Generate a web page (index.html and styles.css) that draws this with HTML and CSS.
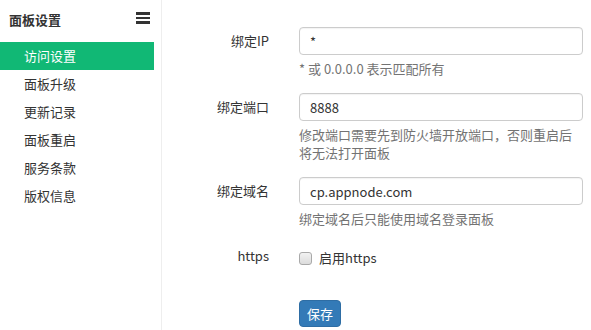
FILE: index.html
```html
<!DOCTYPE html>
<html lang="zh-CN">
<head>
  <meta charset="UTF-8">
  <title>面板设置</title>
  <link rel="stylesheet" href="styles.css">
</head>
<body>
  <div class="layout">
    <!-- Sidebar -->
    <aside class="sidebar">
      <div class="sidebar-header">
        <span class="sidebar-title">面板设置</span>
        <span class="menu-toggle"><i></i><i></i><i></i></span>
      </div>
      <ul class="nav">
        <li class="nav-item active">访问设置</li>
        <li class="nav-item">面板升级</li>
        <li class="nav-item">更新记录</li>
        <li class="nav-item">面板重启</li>
        <li class="nav-item">服务条款</li>
        <li class="nav-item">版权信息</li>
      </ul>
    </aside>

    <!-- Main Form -->
    <main class="content">
      <form class="form">
        <div class="form-group">
          <label class="form-label">绑定IP</label>
          <div class="form-field">
            <input class="form-input" type="text" value="*">
            <p class="help">* 或 0.0.0.0 表示匹配所有</p>
          </div>
        </div>
        <div class="form-group">
          <label class="form-label">绑定端口</label>
          <div class="form-field">
            <input class="form-input" type="text" value="8888">
            <p class="help">修改端口需要先到防火墙开放端口，否则重启后将无法打开面板</p>
          </div>
        </div>
        <div class="form-group">
          <label class="form-label">绑定域名</label>
          <div class="form-field">
            <input class="form-input" type="text" value="cp.appnode.com">
            <p class="help">绑定域名后只能使用域名登录面板</p>
          </div>
        </div>
        <div class="form-group form-group-check">
          <label class="form-label">https</label>
          <div class="form-field">
            <label class="check"><input type="checkbox"> 启用https</label>
          </div>
        </div>
        <div class="form-group form-group-actions">
          <span class="form-label"></span>
          <div class="form-field">
            <button type="button" class="btn-primary">保存</button>
          </div>
        </div>
      </form>
    </main>
  </div>
</body>
</html>
```

FILE: styles.css
```css
* {
  margin: 0;
  padding: 0;
  box-sizing: border-box;
}

body {
  font-family: "Noto Sans CJK SC", "Noto Sans", sans-serif;
  font-size: 13px;
  color: #333;
  background-color: #fff;
  line-height: 18px;
}

.layout {
  display: flex;
  min-height: 330px;
}

/* Sidebar */
.sidebar {
  width: 162px;
  padding-right: 7px;
  border-right: 1px solid #eee;
  flex-shrink: 0;
}

.sidebar-header {
  display: flex;
  align-items: center;
  justify-content: space-between;
  height: 42px;
  padding: 0 4px 2px 9px;
}

.sidebar-title {
  font-weight: bold;
  font-size: 13px;
  color: #333;
}

.menu-toggle {
  display: flex;
  flex-direction: column;
  gap: 2px;
  width: 14px;
  margin-top: -4px;
}

.menu-toggle i {
  display: block;
  height: 2.5px;
  background-color: #333;
}

.nav {
  list-style: none;
}

.nav-item {
  height: 28px;
  line-height: 28px;
  padding-left: 24px;
  color: #333;
}

.nav-item.active {
  background-color: #11b875;
  color: #fff;
}

/* Form */
.content {
  flex: 1;
  padding: 27px 8px 0 0;
}

.form-group {
  display: grid;
  grid-template-columns: 107px 1fr;
  column-gap: 30px;
  margin-bottom: 15px;
}

.form-label {
  text-align: right;
  line-height: 28px;
  color: #333;
}

.form-input {
  display: block;
  width: 100%;
  height: 28px;
  padding: 0 10px;
  border: 1px solid #ccc;
  border-radius: 4px;
  font-family: inherit;
  font-size: 13px;
  color: #333;
  box-shadow: inset 0 1px 1px rgba(0, 0, 0, 0.05);
}

.help {
  margin-top: 5px;
  color: #737373;
}

.form-group-check {
  margin-bottom: 33px;
}

.form-group-check .form-label {
  line-height: 18px;
  padding-top: 4px;
}

.check {
  display: flex;
  align-items: center;
  gap: 7px;
  padding-top: 6px;
  line-height: 18px;
}

.check input {
  appearance: none;
  width: 13px;
  height: 13px;
  border: 1px solid #a9a9a9;
  border-radius: 3px;
  background: linear-gradient(#f2f2f2, #dcdcdc);
  margin: 0;
}

.btn-primary {
  width: 42px;
  height: 27px;
  background-color: #337ab7;
  border: 1px solid #2e6da4;
  border-radius: 4px;
  color: #fff;
  font-family: inherit;
  font-size: 13px;
}
```
